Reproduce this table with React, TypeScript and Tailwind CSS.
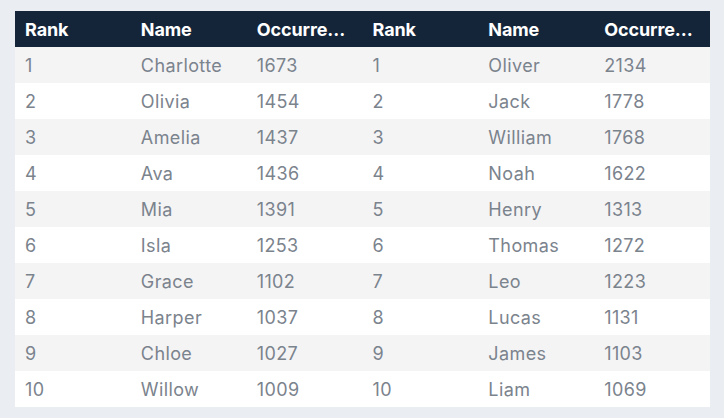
import React from "react";

const girls = [
  ["1", "Charlotte", "1673"],
  ["2", "Olivia", "1454"],
  ["3", "Amelia", "1437"],
  ["4", "Ava", "1436"],
  ["5", "Mia", "1391"],
  ["6", "Isla", "1253"],
  ["7", "Grace", "1102"],
  ["8", "Harper", "1037"],
  ["9", "Chloe", "1027"],
  ["10", "Willow", "1009"],
];
const boys = [
  ["1", "Oliver", "2134"],
  ["2", "Jack", "1778"],
  ["3", "William", "1768"],
  ["4", "Noah", "1622"],
  ["5", "Henry", "1313"],
  ["6", "Thomas", "1272"],
  ["7", "Leo", "1223"],
  ["8", "Lucas", "1131"],
  ["9", "James", "1103"],
  ["10", "Liam", "1069"],
];

const headers = ["Rank", "Name", "Occurrences", "Rank", "Name", "Occurrences"];

export default function App() {
  return (
    <div
      className="w-[724px] h-[418px] bg-[#eaedf1] pt-[11px] pl-[15px]"
      style={{ fontFamily: "Inter, 'Open Sans', sans-serif" }}
    >
      <div className="w-[695px]">
        <div className="grid grid-cols-6 h-[36px] bg-[#14253a] items-center">
          {headers.map((h, i) => (
            <div
              key={i}
              className="px-[10px] text-white font-bold text-[18px] tracking-[-0.1px] truncate"
            >
              {h}
            </div>
          ))}
        </div>
        {girls.map((g, i) => {
          const b = boys[i];
          const cells = [...g, ...b];
          return (
            <div
              key={i}
              className={`grid grid-cols-6 h-[36px] items-center ${
                i % 2 === 0 ? "bg-[#f4f4f5]" : "bg-white"
              }`}
            >
              {cells.map((c, j) => (
                <div
                  key={j}
                  className="px-[10px] text-[#7b838d] text-[18px] tracking-[0.4px] truncate"
                >
                  {c}
                </div>
              ))}
            </div>
          );
        })}
      </div>
    </div>
  );
}
